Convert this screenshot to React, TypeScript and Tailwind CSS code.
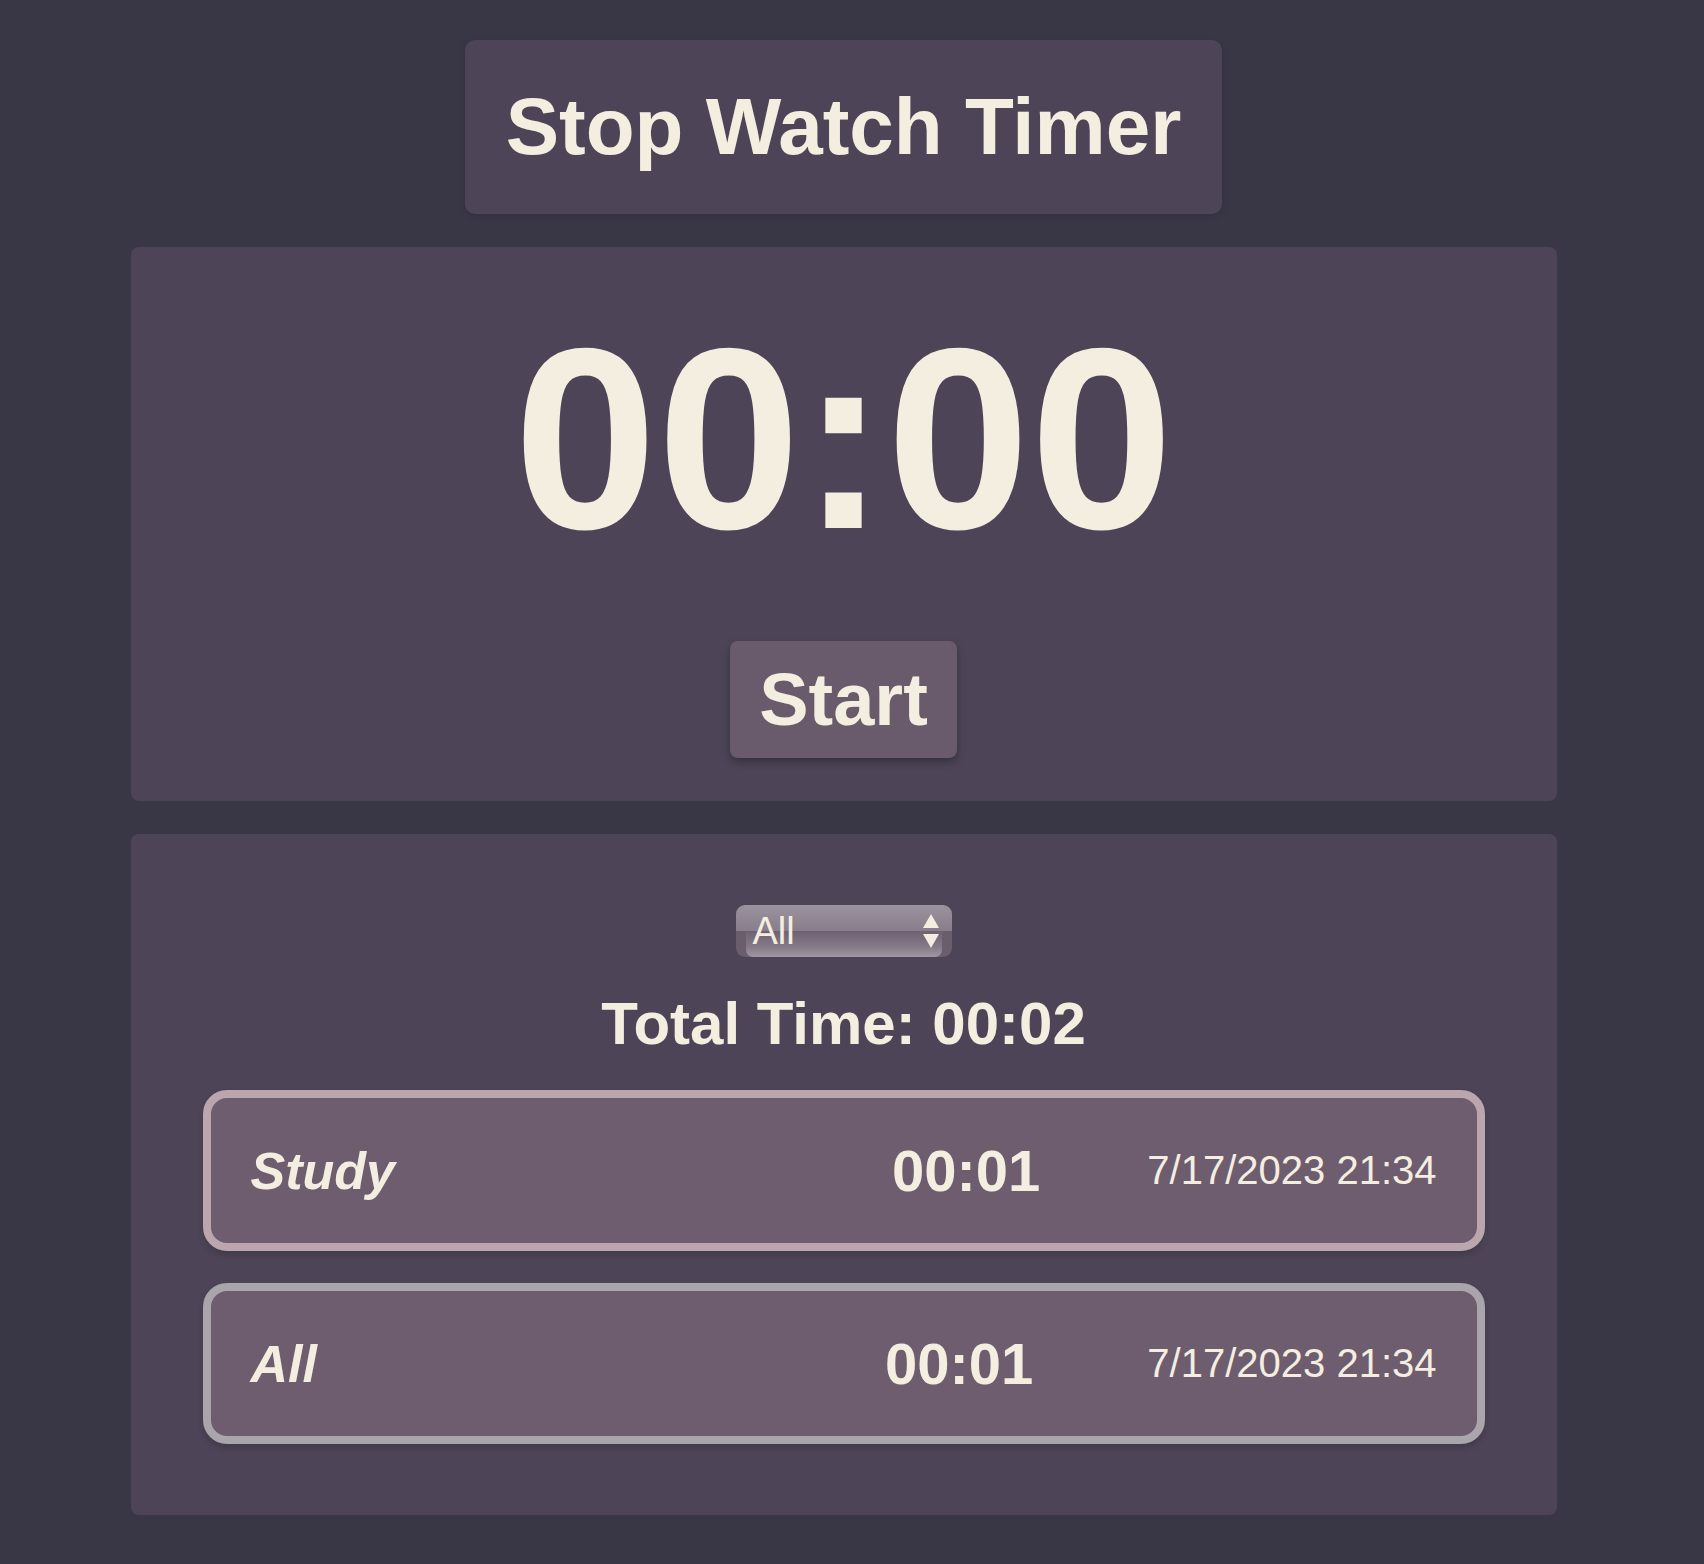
// Stop Watch Timer - single page layout
import { useState } from 'react'

interface RecordItem {
  name: string
  time: string
  date: string
  border: string
  gap: string
}

const records: RecordItem[] = [
  { name: 'Study', time: '00:01', date: '7/17/2023 21:34', border: 'border-[#bba6ae]', gap: 'mr-[107px]' },
  { name: 'All', time: '00:01', date: '7/17/2023 21:34', border: 'border-[#aaa5ad]', gap: 'mr-[114px]' },
]

function CategorySelect({ value }: { value: string }) {
  return (
    <div className="relative w-[216px] h-[52px] rounded-[9px] overflow-hidden bg-[linear-gradient(to_bottom,#9b939e_0%,#887e8b_50%,#6a5d6c_50%,#6a5d6c_100%)]">
      {/* glossy lower half */}
      <div className="absolute left-[10px] right-[10px] top-1/2 bottom-0 rounded-b-[7px] bg-[linear-gradient(to_bottom,#6e6172_0%,#857a88_60%,#a097a3_100%)]" />
      <div className="relative flex items-center h-full pl-[17px] pr-[13px]">
        <span className="flex-1 text-[38px] leading-[52px] text-[#F4EEE0]">{value}</span>
        <div className="flex flex-col items-center gap-[6px]">
          <svg width="16" height="14" viewBox="0 0 16 14" className="block">
            <path d="M8 0 L16 14 L0 14 Z" fill="#F4EEE0" />
          </svg>
          <svg width="16" height="14" viewBox="0 0 16 14" className="block">
            <path d="M0 0 L16 0 L8 14 Z" fill="#F4EEE0" />
          </svg>
        </div>
      </div>
    </div>
  )
}

function RecordCard({ item }: { item: RecordItem }) {
  return (
    <div
      className={`w-full flex items-center rounded-3xl border-[8px] ${item.border} bg-[#6D5D6E] px-10 py-[39px] leading-[normal] shadow-[0_4px_6px_rgba(0,0,0,0.15)]`}
    >
      <div className="flex-1 text-[52px] font-bold italic">{item.name}</div>
      <div className={`text-[58px] font-bold ${item.gap}`}>{item.time}</div>
      <div className="text-[40px]">{item.date}</div>
    </div>
  )
}

export default function App() {
  const [running, setRunning] = useState(false)

  return (
    <div className="w-full min-h-screen bg-[#393646] text-[#F4EEE0] font-['Liberation_Sans',Arial,sans-serif]">
      <div className="w-[1687px] flex flex-col items-center pt-10 pb-[50px] gap-[33px]">
        {/* Title */}
        <h1 className="rounded-[10px] bg-[#4D4557] px-[41px] py-[41px] text-[80px] font-bold leading-[92px] shadow-[0_2px_6px_rgba(0,0,0,0.12)]">
          Stop Watch Timer
        </h1>

        {/* Timer */}
        <div className="w-[1426px] flex flex-col items-center gap-[54px] rounded-lg bg-[#4D4557] pt-[44px] pb-[43px]">
          <div className="text-[258px] font-bold leading-[296px]">00:00</div>
          <button
            onClick={() => setRunning(!running)}
            className="rounded-lg bg-[#6A5B6C] px-[29px] py-[16px] text-[74px] font-bold leading-[85px] text-[#F4EEE0] shadow-[0_4px_8px_rgba(0,0,0,0.3)]"
          >
            {running ? 'Stop' : 'Start'}
          </button>
        </div>

        {/* Records */}
        <div className="w-[1426px] flex flex-col items-center gap-8 rounded-lg bg-[#4D4557] px-[72px] py-[71px]">
          <CategorySelect value="All" />
          <div className="text-[60px] font-bold leading-[69px]">Total Time: 00:02</div>
          {records.map((item, index) => (
            <RecordCard key={index} item={item} />
          ))}
        </div>
      </div>
    </div>
  )
}
